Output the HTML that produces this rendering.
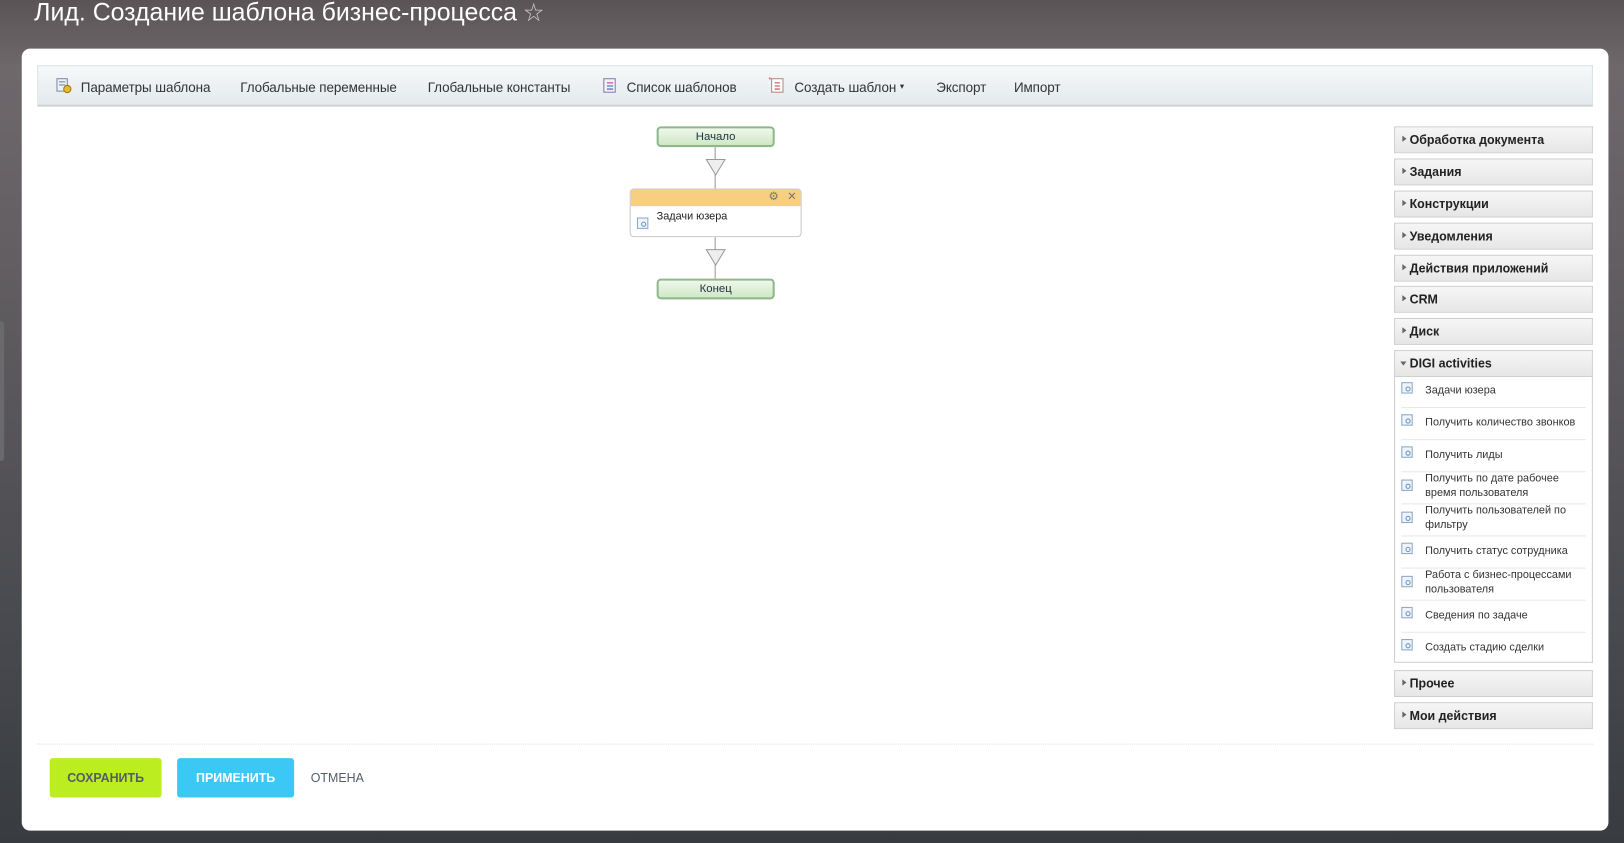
<!DOCTYPE html>
<html><head><meta charset="utf-8"><style>
html,body{margin:0;padding:0;width:1624px;height:843px;overflow:hidden;}
body{background:linear-gradient(180deg,#5a5457 0%,#6e686b 8%,#5d5a5e 40%,#45474c 80%,#383b40 100%);font-family:"Liberation Sans","Noto Sans CJK SC",sans-serif;}
#root{position:absolute;left:0;top:0;width:1568px;height:814px;transform:scale(1.0357);transform-origin:0 0;}
.abs{position:absolute;}
h1{position:absolute;left:33px;top:-2px;margin:0;font-weight:normal;font-size:24px;color:#fff;letter-spacing:0px;white-space:nowrap;}
.card{left:21px;top:47px;width:1532px;height:755px;background:#fff;border-radius:8px;}
.tb{left:36px;top:63px;width:1502px;height:40px;background:linear-gradient(#f7f9fa,#e3e9ec);border:1px solid #d9e0e3;border-bottom:2px solid #cbd3d7;box-sizing:border-box;}
.tb span{position:absolute;top:13px;font-size:13px;color:#333;letter-spacing:-0.1px;}
.ph{left:1346px;width:192px;height:26px;background:linear-gradient(#f6f6f6,#e6e6e6);border:1px solid #cfcfcf;box-sizing:border-box;font-size:12px;font-weight:bold;color:#222;line-height:24px;padding-left:14px;}
.ph:before{content:"";position:absolute;left:7px;top:8px;border-left:4px solid #666;border-top:3.5px solid transparent;border-bottom:3.5px solid transparent;}
.ph.open:before{left:5px;top:10px;border-top:4px solid #666;border-left:3.5px solid transparent;border-right:3.5px solid transparent;border-bottom:0;}
.list{left:1346px;top:362px;width:192px;height:278px;border:1px solid #cfcfcf;border-top:0;box-sizing:border-box;}
.it{position:absolute;left:6px;width:178px;height:31px;border-bottom:1px solid #e8e8e8;font-size:10.5px;color:#333;}
.it .ic{position:absolute;left:0;top:7px;}
.it .t{position:absolute;left:23px;line-height:14px;}
.ic{width:11px;height:11px;border:1px solid #8aa9c8;background:#eef4fa;box-sizing:border-box;}
.ic:after{content:"";position:absolute;left:3px;top:3px;width:3px;height:3px;border:1px solid #6f95bb;border-radius:50%;}
.node{width:114px;height:20px;background:linear-gradient(#eef8ea,#cfe8c6);border:2px solid #8fb88a;border-radius:4px;box-sizing:border-box;text-align:center;font-size:11px;color:#234;line-height:16px;}
.btn{top:732px;height:38px;border-radius:3px;font-size:12px;font-weight:bold;line-height:38px;text-align:center;}
</style></head><body><div id="root">
<h1>Лид. Создание шаблона бизнес-процесса <span style="font-size:19px;color:#cfcfcf;vertical-align:1px">☆</span></h1>
<div class="abs" style="left:0;top:310px;width:4px;height:135px;background:#6a6a6c;border-radius:0 3px 3px 0"></div>
<div class="abs card"></div>
<div class="abs tb">
 <svg class="abs" style="left:17px;top:11px" width="16" height="16"><rect x="1" y="1" width="10" height="12" fill="#eef2f8" stroke="#7a8aa8"/><line x1="3" y1="4" x2="9" y2="4" stroke="#7a8aa8"/><line x1="3" y1="7" x2="9" y2="7" stroke="#7a8aa8"/><circle cx="11" cy="11" r="3.5" fill="#e8b830" stroke="#a07a10"/></svg>
 <span style="left:41px">Параметры шаблона</span>
 <span style="left:195px">Глобальные переменные</span>
 <span style="left:376px">Глобальные константы</span>
 <svg class="abs" style="left:545px;top:11px" width="14" height="16"><rect x="1" y="1" width="11" height="13" fill="#f4f0f8" stroke="#8a7aa8"/><line x1="4" y1="5" x2="10" y2="5" stroke="#c02a8a"/><line x1="4" y1="8" x2="10" y2="8" stroke="#3a5ab0"/><line x1="4" y1="11" x2="10" y2="11" stroke="#3a5ab0"/></svg>
 <span style="left:568px">Список шаблонов</span>
 <svg class="abs" style="left:705px;top:9px" width="16" height="18"><rect x="3" y="3" width="11" height="13" fill="#fff" stroke="#b08a7a"/><line x1="6" y1="7" x2="11" y2="7" stroke="#c04040"/><line x1="6" y1="10" x2="11" y2="10" stroke="#c04040"/><line x1="6" y1="13" x2="11" y2="13" stroke="#c04040"/><text x="0" y="6" font-size="7" fill="#e03030">*</text></svg>
 <span style="left:730px">Создать шаблон <small style="font-size:8px;vertical-align:3px">▾</small></span>
 <span style="left:867px">Экспорт</span>
 <span style="left:942px">Импорт</span>
</div>
<div class="abs node" style="left:634px;top:122px">Начало</div>
<div class="abs" style="left:690px;top:142px;width:1px;height:40px;background:#999"></div>
<svg class="abs" style="left:681px;top:153px" width="20" height="18"><polygon points="1,1 19,1 10,16" fill="#eee" stroke="#999"/></svg>
<div class="abs" style="left:608px;top:182px;width:166px;height:47px;border:1px solid #c9c9c9;border-radius:4px;box-sizing:border-box;background:#fff;overflow:hidden">
 <div style="height:16px;background:#f8cf80"></div>
 <span class="abs" style="left:133px;top:0px;font-size:11px;color:#777">⚙</span>
 <span class="abs" style="left:151px;top:0px;font-size:11px;color:#777">✕</span>
 <div class="abs ic" style="left:6px;top:27px"></div>
 <span class="abs" style="left:25px;top:20px;font-size:10.5px;color:#222">Задачи юзера</span>
</div>
<div class="abs" style="left:690px;top:229px;width:1px;height:40px;background:#999"></div>
<svg class="abs" style="left:681px;top:240px" width="20" height="18"><polygon points="1,1 19,1 10,16" fill="#eee" stroke="#999"/></svg>
<div class="abs node" style="left:634px;top:269px">Конец</div>
<div class="abs ph" style="top:122px">Обработка документа</div>
<div class="abs ph" style="top:153px">Задания</div>
<div class="abs ph" style="top:184px">Конструкции</div>
<div class="abs ph" style="top:215px">Уведомления</div>
<div class="abs ph" style="top:246px">Действия приложений</div>
<div class="abs ph" style="top:276px">CRM</div>
<div class="abs ph" style="top:307px">Диск</div>
<div class="abs ph open" style="top:338px">DIGI activities</div>
<div class="abs list">
 <div class="it" style="top:0"><div class="ic"></div><span class="t" style="top:8px">Задачи юзера</span></div>
 <div class="it" style="top:31px"><div class="ic"></div><span class="t" style="top:8px">Получить количество звонков</span></div>
 <div class="it" style="top:62px"><div class="ic"></div><span class="t" style="top:8px">Получить лиды</span></div>
 <div class="it" style="top:93px"><div class="ic" style="top:8px"></div><span class="t" style="top:0px">Получить по дате рабочее<br>время пользователя</span></div>
 <div class="it" style="top:124px"><div class="ic" style="top:8px"></div><span class="t" style="top:0px">Получить пользователей по<br>фильтру</span></div>
 <div class="it" style="top:155px"><div class="ic"></div><span class="t" style="top:8px">Получить статус сотрудника</span></div>
 <div class="it" style="top:186px"><div class="ic" style="top:8px"></div><span class="t" style="top:0px">Работа с бизнес-процессами<br>пользователя</span></div>
 <div class="it" style="top:217px"><div class="ic"></div><span class="t" style="top:8px">Сведения по задаче</span></div>
 <div class="it" style="top:248px;border:0"><div class="ic"></div><span class="t" style="top:8px">Создать стадию сделки</span></div>
</div>
<div class="abs ph" style="top:647px">Прочее</div>
<div class="abs ph" style="top:678px">Мои действия</div>
<div class="abs" style="left:36px;top:718px;width:1502px;border-top:1px dotted #ddd"></div>
<div class="abs btn" style="left:48px;width:108px;background:#bbed21;color:#535c69">СОХРАНИТЬ</div>
<div class="abs btn" style="left:171px;width:113px;background:#3bc8f5;color:#fff">ПРИМЕНИТЬ</div>
<div class="abs btn" style="left:300px;width:50px;color:#535c69;font-weight:normal;text-align:left">ОТМЕНА</div>
</div></body></html>
